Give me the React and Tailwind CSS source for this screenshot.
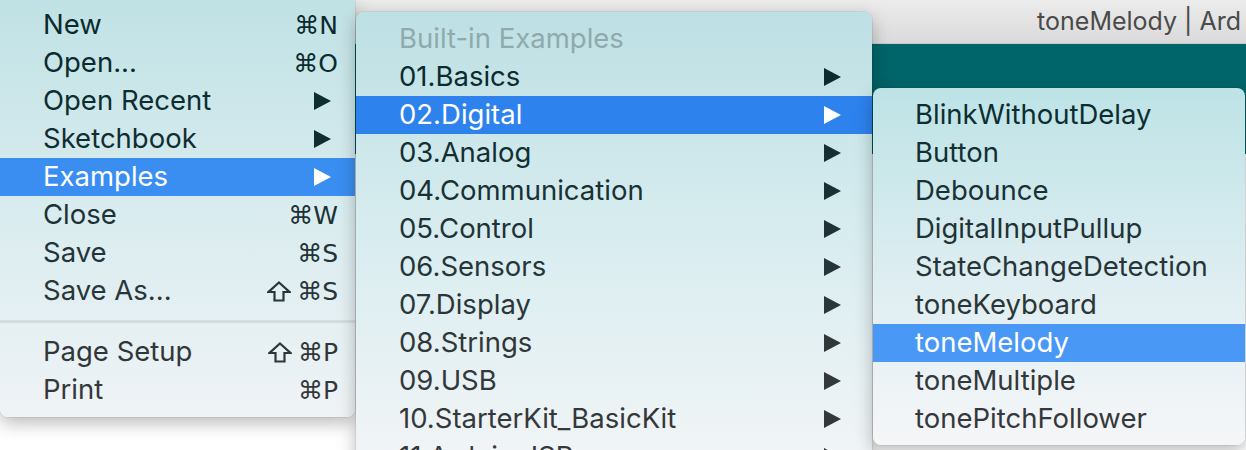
import React from 'react';

const fileItems = [
  { label: 'New', keys: '⌘N', tone: 'text-[#0a2a2e]' },
  { label: 'Open...', keys: '⌘O', tone: 'text-[#0b2b2f]' },
  { label: 'Open Recent', sub: true, tone: 'text-[#0d2d31]' },
  { label: 'Sketchbook', sub: true, tone: 'text-[#102e32]' },
  { label: 'Examples', sub: true, active: true },
  { label: 'Close', keys: '⌘W', tone: 'text-[#1c3235]' },
  { label: 'Save', keys: '⌘S', tone: 'text-[#223438]' },
  { label: 'Save As...', keys: '⌘S', shift: true, tone: 'text-[#283639]' },
  { sep: true },
  { label: 'Page Setup', keys: '⌘P', shift: true, tone: 'text-[#303739]' },
  { label: 'Print', keys: '⌘P', tone: 'text-[#34383a]' },
];

const exampleItems = [
  { label: '01.Basics', tone: 'text-[#0b2b2f]' },
  { label: '02.Digital', active: true },
  { label: '03.Analog', tone: 'text-[#132f33]' },
  { label: '04.Communication', tone: 'text-[#193134]' },
  { label: '05.Control', tone: 'text-[#1f3336]' },
  { label: '06.Sensors', tone: 'text-[#263538]' },
  { label: '07.Display', tone: 'text-[#2b3639]' },
  { label: '08.Strings', tone: 'text-[#303739]' },
  { label: '09.USB', tone: 'text-[#33383a]' },
  { label: '10.StarterKit_BasicKit', tone: 'text-[#35383a]' },
  { label: '11.ArduinoISP', tone: 'text-[#36393b]' },
];

const digitalItems = [
  { label: 'BlinkWithoutDelay', tone: 'text-[#0e2d31]' },
  { label: 'Button', tone: 'text-[#132f33]' },
  { label: 'Debounce', tone: 'text-[#193134]' },
  { label: 'DigitalInputPullup', tone: 'text-[#1f3336]' },
  { label: 'StateChangeDetection', tone: 'text-[#263538]' },
  { label: 'toneKeyboard', tone: 'text-[#2b3639]' },
  { label: 'toneMelody', active: true },
  { label: 'toneMultiple', tone: 'text-[#33383a]' },
  { label: 'tonePitchFollower', tone: 'text-[#35383a]' },
];

function Arrow({ className }) {
  return (
    <svg width="17" height="18" viewBox="0 0 17 18" className={className}>
      <polygon points="0,0 17,9 0,18" fill="currentColor" />
    </svg>
  );
}

// outlined shift key symbol
function Shift() {
  return (
    <svg width="24" height="21" viewBox="0 0 24 21" className="mr-[6px]">
      <polygon
        points="12,1.5 22.5,11 16.5,11 16.5,19.5 7.5,19.5 7.5,11 1.5,11"
        fill="none"
        stroke="currentColor"
        strokeWidth="2.2"
        strokeLinejoin="miter"
      />
    </svg>
  );
}

function FileMenu() {
  return (
    <div className="relative w-[355px] shrink-0 rounded-b-[8px] bg-linear-to-b from-[#c0e2e5] via-[#d9ecef] to-[#eff3f6] pt-[6px] pb-[8px] shadow-[0_6px_18px_rgba(0,0,0,0.28),0_0_0_1px_rgba(0,0,0,0.06)]">
      {fileItems.map((item, i) => {
        if (item.sep) {
          return (
            <div key={i} className="h-[23px] pt-[10px]">
              <div className="h-[3px] bg-[#d5dcdf]" />
            </div>
          );
        }
        return (
          <div
            key={i}
            className={`flex h-[38px] items-center justify-between pl-[43px] pr-[17px] ${
              item.active ? 'bg-[#3a8ef1] text-white' : item.tone
            }`}
          >
            <span>{item.label}</span>
            {item.sub ? (
              <Arrow className="mr-[7px]" />
            ) : (
              <span className="flex items-center font-['DejaVu_Sans',sans-serif] text-[25px]">
                {item.shift && <Shift />}
                {item.keys}
              </span>
            )}
          </div>
        );
      })}
    </div>
  );
}

function ExamplesMenu() {
  return (
    <div className="relative ml-[1px] mt-[12px] w-[516px] shrink-0 rounded-t-[8px] bg-linear-to-b from-[#bde0e4] via-[#d9edf0] to-[#f3f5f7] pt-[8px] shadow-[0_6px_18px_rgba(0,0,0,0.28),0_0_0_1px_rgba(0,0,0,0.06)]">
      <div className="flex h-[38px] items-center pl-[43px] text-[#8fa9ad]">Built-in Examples</div>
      {exampleItems.map((item) => (
        <div
          key={item.label}
          className={`flex h-[38px] items-center justify-between pl-[43px] pr-[31px] ${
            item.active ? 'bg-[#2d82ee] text-white' : item.tone
          }`}
        >
          <span>{item.label}</span>
          <Arrow />
        </div>
      ))}
    </div>
  );
}

function DigitalMenu() {
  return (
    <div className="relative ml-[1px] mt-[88px] w-[372px] shrink-0 rounded-[8px] bg-linear-to-b from-[#bde3e6] via-[#dcedf1] to-[#f5f6f8] pt-[8px] pb-[7px] shadow-[0_6px_18px_rgba(0,0,0,0.28),0_0_0_1px_rgba(0,0,0,0.06)]">
      {digitalItems.map((item) => (
        <div
          key={item.label}
          className={`flex h-[38px] items-center pl-[42px] ${
            item.active ? 'bg-[#4a98f6] text-white' : item.tone
          }`}
        >
          {item.label}
        </div>
      ))}
    </div>
  );
}

export default function App() {
  return (
    <div className="relative h-[450px] w-[1246px] overflow-hidden bg-[#f5f5f5] font-['Inter',sans-serif] text-[27.5px] leading-none">
      {/* window behind the menus */}
      <div className="flex h-[44px] items-center justify-end border-b border-[#c9c9c9] bg-linear-to-b from-[#ececec] to-[#dadada] pr-[5px] text-[25px] text-[#4a4a4a]">
        toneMelody | Ard
      </div>
      <div className="h-[110px] bg-[#00656a]" />
      <div className="h-[300px] bg-white" />

      {/* open menus */}
      <div className="absolute inset-0 flex items-start">
        <FileMenu />
        <ExamplesMenu />
        <DigitalMenu />
      </div>
    </div>
  );
}
